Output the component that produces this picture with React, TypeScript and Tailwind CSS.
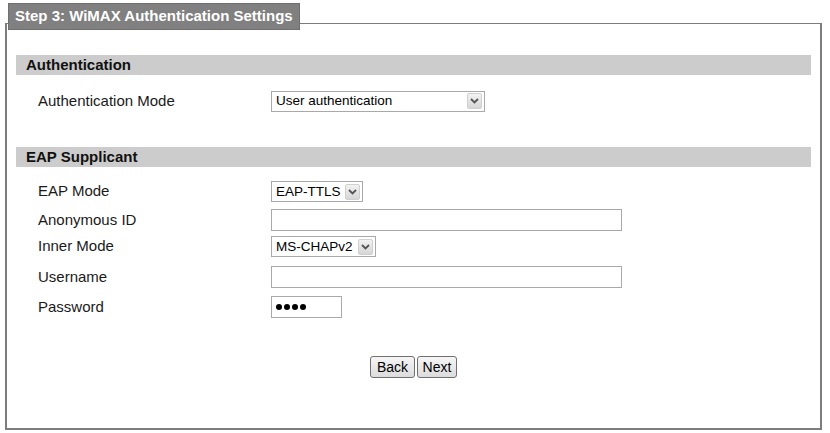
const font = { fontFamily: '"Liberation Sans", Arial, sans-serif' };

function Chevron() {
  return (
    <svg width="9" height="6" viewBox="0 0 9 6" aria-hidden>
      <path d="M1 1l3.5 3.5L8 1" fill="none" stroke="#555" strokeWidth="1.8" />
    </svg>
  );
}

function FakeSelect({ value, width }: { value: string; width: string }) {
  return (
    <div className={`flex h-[21px] items-center gap-[3px] border border-[#a9a9a9] bg-white pl-[4px] pr-[2px] ${width}`}>
      <span className="flex-1 text-[13.5px] leading-none whitespace-nowrap text-black">{value}</span>
      <span className="flex h-[16px] w-[15px] shrink-0 items-center justify-center rounded-[2px] border border-[#d0d0d0] bg-gradient-to-b from-[#f2f2f2] to-[#d6d6d6]">
        <Chevron />
      </span>
    </div>
  );
}

function Row({ label, children, className = "" }: { label: string; children: React.ReactNode; className?: string }) {
  return (
    <div className={`flex items-center ${className}`}>
      <div className="w-[264px] pl-[31px] text-[15px] text-[#1a1a1a]">{label}</div>
      {children}
    </div>
  );
}

function SectionBar({ title, className = "" }: { title: string; className?: string }) {
  return (
    <div className={`mx-[9px] flex h-[20px] items-center bg-[#cccccc] pl-[10px] text-[15px] font-bold text-[#111] ${className}`}>
      {title}
    </div>
  );
}

export default function App() {
  return (
    <div className="h-[433px] w-[830px] bg-white pl-[5px] pr-[8px] pt-[3px]" style={font}>
      {/* legend tab */}
      <div className="relative z-10 ml-[3px] flex h-[27px] w-fit items-center border border-[#6f6f6f] bg-[#808080] px-[6px] text-[15px] font-bold text-white">
        Step 3: WiMAX Authentication Settings
      </div>

      <div className="-mt-[7px] border-t border-r-2 border-b-2 border-l-2 border-[#7d7d7d] pt-[31px] pb-[50px]">
        <SectionBar title="Authentication" />

        <Row label="Authentication Mode" className="mt-[15px] h-[22px]">
          <FakeSelect value="User authentication" width="w-[214px]" />
        </Row>

        <SectionBar title="EAP Supplicant" className="mt-[35px]" />

        <Row label="EAP Mode" className="mt-[14px] h-[21px]">
          <FakeSelect value="EAP-TTLS" width="w-[92px]" />
        </Row>
        <Row label="Anonymous ID" className="mt-[7px] h-[22px]">
          <div className="h-[22px] w-[351px] border border-[#a9a9a9] bg-white" />
        </Row>
        <Row label="Inner Mode" className="mt-[5px] h-[21px]">
          <FakeSelect value="MS-CHAPv2" width="w-[105px]" />
        </Row>
        <Row label="Username" className="mt-[9px] h-[22px]">
          <div className="h-[22px] w-[351px] border border-[#a9a9a9] bg-white" />
        </Row>
        <Row label="Password" className="mt-[8px] h-[22px]">
          <div className="flex h-[22px] w-[71px] items-center gap-[2px] border border-[#a9a9a9] bg-white pl-[4px]">
            <span className="h-[6px] w-[6px] rounded-full bg-black" />
            <span className="h-[6px] w-[6px] rounded-full bg-black" />
            <span className="h-[6px] w-[6px] rounded-full bg-black" />
            <span className="h-[6px] w-[6px] rounded-full bg-black" />
          </div>
        </Row>

        <div className="mt-[38px] flex h-[22px] justify-center gap-[2px]">
          <button className="h-[22px] w-[45px] rounded-[3px] border border-[#707070] bg-gradient-to-b from-[#f6f6f6] to-[#dcdcdc] text-[14px] text-black">
            Back
          </button>
          <button className="h-[22px] w-[40px] rounded-[3px] border border-[#707070] bg-gradient-to-b from-[#f6f6f6] to-[#dcdcdc] text-[14px] text-black">
            Next
          </button>
        </div>
      </div>
    </div>
  );
}
